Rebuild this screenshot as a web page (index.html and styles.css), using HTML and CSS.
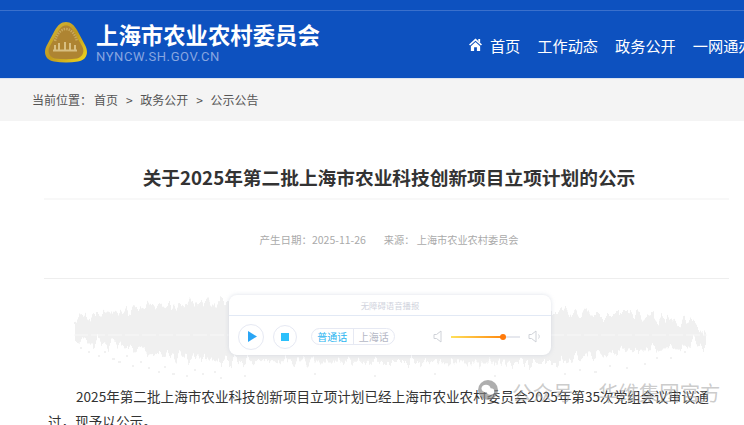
FILE: index.html
```html
<!DOCTYPE html>
<html lang="zh-CN">
<head>
  <meta charset="UTF-8">
  <meta name="viewport" content="width=device-width, initial-scale=1.0">
  <title>关于2025年第二批上海市农业科技创新项目立项计划的公示</title>
  <link rel="stylesheet" href="styles.css">
</head>
<body>
  <header class="header">
    <div class="header-inner">
      <a class="brand" href="#">
        <svg class="brand-logo" viewBox="0 0 44 42" aria-hidden="true">
          <defs>
            <linearGradient id="rim" x1="0" y1="0" x2="1" y2="1">
              <stop offset="0" stop-color="#d8bc3a"/>
              <stop offset="0.5" stop-color="#c09a1e"/>
              <stop offset="1" stop-color="#f0d820"/>
            </linearGradient>
          </defs>
          <path d="M22 0C27 0 30 3 33 8L41 23C45 30 43 38 34 39.500C26 40.800 18 40.800 10 39.500C1 38 -1 30 3 23L11 8C14 3 17 0 22 0Z" fill="url(#rim)"/>
          <path d="M22 3.500C25.500 3.500 28 6 30 10L38 24C41 29 39 35 33 36.500C26 37.500 18 37.500 11 36.500C5 35 3 29 6 24L14 10C16 6 18.500 3.500 22 3.500Z" fill="#ae8432"/>
          <path d="M11 19C13 12 17 7 22 7C27 7 31 12 33 19" fill="none" stroke="#c9a95c" stroke-width="2.500" stroke-dasharray="1.500 1"/>
          <path d="M9 28.500H33M11 28V23M15 28V21M21 28V20M26 28V21M31 28V23" fill="none" stroke="#d8bf82" stroke-width="2"/>
        </svg>
        <span class="brand-text">
          <span class="brand-name">上海市农业农村委员会</span>
          <span class="brand-url">NYNCW.SH.GOV.CN</span>
        </span>
      </a>
      <nav class="nav">
        <a href="#">
          <svg class="nav-home" viewBox="0 0 14 14" aria-hidden="true">
            <path d="M7 0.500L14 7L12.800 8.200L7 3L1.200 8.200L0 7Z"/>
            <path d="M10 1H12V5L10 3.200Z"/>
            <path d="M7 4.200L12 8.800V14H8.500V10H5.500V14H2V8.800Z"/>
          </svg>首页</a>
        <a href="#">工作动态</a>
        <a href="#">政务公开</a>
        <a href="#">一网通办</a>
      </nav>
    </div>
  </header>

  <div class="crumbs">
    <span>当前位置：</span>
    <a href="#">首页</a>
    <i>&gt;</i>
    <a href="#">政务公开</a>
    <i>&gt;</i>
    <a href="#">公示公告</a>
  </div>

  <main class="article">
    <h1 class="article-title">关于2025年第二批上海市农业科技创新项目立项计划的公示</h1>
    <div class="article-meta">
      <span>产生日期：2025-11-26</span>
      <span class="article-source">来源： 上海市农业农村委员会</span>
    </div>

    <section class="reader">
      <svg class="reader-wave" viewBox="0 0 633 86" aria-hidden="true">
        <defs>
          <filter id="wave-noise" x="-2%" y="-20%" width="104%" height="140%">
            <feTurbulence type="fractalNoise" baseFrequency="0.22 0.015" numOctaves="3" seed="7" result="noise"/>
            <feDisplacementMap in="SourceGraphic" in2="noise" scale="24" xChannelSelector="R" yChannelSelector="G"/>
          </filter>
        </defs>
        <g filter="url(#wave-noise)">
          <path d="M0 24L40 20L76 12L110 9L150 7L481 15L520 19L560 19L600 25L633 33V47L600 53L560 55L520 60L481 68L150 66L110 62L76 58L40 50L0 46Z"/>
        </g>
        <path class="wave-dots" d="M6 52h2v2h-2zM14 56h2v2h-2zM24 60h2v2h-2zM30 56h2v2h-2zM38 63h3v2h-3zM44 66h3v2h-3zM52 60h2v2h-2zM58 70h2v2h-2zM66 66h2v2h-2zM74 72h2v2h-2zM84 76h2v2h-2zM90 71h2v2h-2zM98 78h3v2h-3zM112 80h2v2h-2zM120 74h2v2h-2zM128 78h2v2h-2zM146 82h2v2h-2zM140 76h2v2h-2zM490 78h2v2h-2zM505 74h2v2h-2zM520 76h3v2h-3zM535 70h2v2h-2zM552 72h2v2h-2zM570 68h2v2h-2zM582 62h2v2h-2zM596 62h2v2h-2zM610 56h2v2h-2zM170 80h2v2h-2zM240 78h2v2h-2zM300 80h2v2h-2zM360 78h2v2h-2zM420 80h2v2h-2z"/>
        <path class="wave-mid" d="M0 40H633"/>
      </svg>
      <div class="player">
        <div class="player-head">无障碍语音播报</div>
        <div class="player-body">
          <button class="player-btn player-btn-play" aria-label="播放">
            <svg viewBox="0 0 10 12"><path d="M0 0L10 6L0 12Z"/></svg>
          </button>
          <button class="player-btn player-btn-stop" aria-label="停止"><span></span></button>
          <div class="dialects">
            <span class="dialect dialect-on">普通话</span>
            <span class="dialect">上海话</span>
          </div>
          <svg class="vol-icon vol-low" viewBox="0 0 9 13" aria-hidden="true">
            <path d="M8 1V12L3.500 8.500H1V4.500H3.500Z"/>
          </svg>
          <div class="vol-track"><div class="vol-fill"></div></div>
          <svg class="vol-icon vol-high" viewBox="0 0 13 13" aria-hidden="true">
            <path d="M8 1V12L3.500 8.500H1V4.500H3.500Z"/>
            <path d="M10.500 4.500C11.500 5.800 11.500 7.200 10.500 8.500"/>
          </svg>
        </div>
      </div>
    </section>

    <p class="article-text">2025年第二批上海市农业科技创新项目立项计划已经上海市农业农村委员会2025年第35次党组会议审议通过，现予以公示。</p>
  </main>

  <div class="watermark">
    <svg class="watermark-icon" viewBox="0 0 20 20" aria-hidden="true">
      <circle cx="10" cy="10" r="10"/>
      <ellipse cx="8" cy="8.500" rx="4.500" ry="3.800" fill="#fff"/>
      <ellipse cx="12.500" cy="11.500" rx="3.800" ry="3.200" fill="#fff"/>
    </svg>
    <span class="watermark-label">公众号</span>
    <span>华维集团官方</span>
  </div>
</body>
</html>
```

FILE: styles.css
```css
html, body {
  height: 100%;
  overflow: hidden;
}
body {
  margin: 0;
  position: relative;
  background: #fff;
  color: #333;
  font-family: "Noto Sans CJK SC", "Liberation Sans", sans-serif;
}
a {
  color: inherit;
  text-decoration: none;
}

.header {
  height: 78px;
  box-sizing: border-box;
  padding-top: 10px;
  background: #0d51bf;
}
.header-inner {
  height: 67px;
  border-top: 1px solid #3a70cc;
  display: flex;
  padding-left: 44px;
}
.brand {
  display: flex;
  align-items: center;
  gap: 8px;
  flex-shrink: 0;
  padding-bottom: 6px;
}
.brand-logo {
  width: 44px;
  height: 42px;
  margin-top: 2px;
}
.brand-text {
  display: flex;
  flex-direction: column;
}
.brand-name {
  color: #fff;
  font-size: 22.400px;
  font-weight: 700;
  line-height: 30px;
}
.brand-url {
  color: #88a6e0;
  font-family: Roboto, "Liberation Sans", sans-serif;
  font-size: 13px;
  letter-spacing: 0.600px;
  line-height: 16px;
}
.nav {
  display: flex;
  align-items: center;
  gap: 17px;
  flex-shrink: 0;
  font-size: 15.200px;
  color: #fff;
  margin-left: 149px;
}
.nav a {
  display: flex;
  align-items: center;
  white-space: nowrap;
}
.nav-home {
  width: 13px;
  height: 13px;
  margin-right: 8px;
  fill: #fff;
}

.crumbs {
  height: 43px;
  background: #f4f4f4;
  border-top: 1px solid #dbe3f0;
  box-sizing: border-box;
  padding: 0 0 2px 32px;
  display: flex;
  align-items: center;
  font-size: 12px;
  color: #555;
}
.crumbs span {
  margin-right: 2px;
}
.crumbs i {
  font-style: normal;
  margin: 0 7.500px 0 8px;
}

.article {
  padding: 0 15px 0 44px;
}
.article-title {
  margin: 0;
  height: 79px;
  box-sizing: border-box;
  padding: 42px 0 0 5px;
  border-bottom: 2px solid #f8f8f8;
  font-size: 18.700px;
  font-weight: 700;
  line-height: 28px;
  color: #333;
  text-align: center;
}
.article-meta {
  height: 78px;
  padding-left: 5px;
  border-bottom: 1px solid #eee;
  display: flex;
  justify-content: center;
  align-items: center;
  gap: 18px;
  font-size: 10.500px;
  color: #aaa;
}
.article-source {
  font-size: 10.200px;
}

.reader {
  position: relative;
  height: 105px;
  display: flex;
  justify-content: center;
  padding: 16px 0 0 7px;
  box-sizing: border-box;
}
.reader-wave {
  position: absolute;
  left: 30px;
  top: 16px;
  width: 633px;
  height: 86px;
  fill: #f0f0f0;
}
.wave-dots {
  fill: #f1f1f1;
}
.wave-mid {
  fill: none;
  stroke: #f8f8f8;
  stroke-width: 1;
  stroke-dasharray: 14 3;
}
.player {
  position: relative;
  width: 322px;
  height: 60px;
  background: #fff;
  border-radius: 8px;
  box-shadow: 0 0 4px rgba(170, 180, 200, 0.4);
}
.player-head {
  height: 20px;
  border-bottom: 1px solid #e2e9f5;
  font-size: 8.400px;
  line-height: 20px;
  text-align: center;
  color: #d0d3dd;
}
.player-body {
  height: 41px;
  display: flex;
  align-items: center;
  padding-left: 9px;
}
.player-btn {
  padding: 0;
  background: #fff;
  border: 1px solid #e6e9f3;
  border-radius: 50%;
  display: flex;
  align-items: center;
  justify-content: center;
}
.player-btn-play {
  width: 26px;
  height: 26px;
}
.player-btn-play svg {
  width: 9px;
  height: 11px;
  fill: #2aa5f5;
  margin-left: 2px;
}
.player-btn-stop {
  width: 24px;
  height: 24px;
  margin-left: 9px;
}
.player-btn-stop span {
  width: 8px;
  height: 8px;
  background: #2cc0fb;
}
.dialects {
  margin-left: 14px;
  width: 84px;
  height: 17px;
  box-sizing: border-box;
  border: 1px solid #e6e9f3;
  border-radius: 9px;
  display: flex;
  align-items: center;
  font-size: 10px;
}
.dialect {
  flex: 1;
  text-align: center;
  color: #b5b8c5;
  line-height: 15px;
}
.dialect-on {
  color: #2bb5f0;
  border-right: 1px solid #e6e9f3;
}
.vol-icon {
  height: 13px;
  fill: none;
  stroke: #cfd2d8;
  stroke-width: 1;
}
.vol-low {
  width: 9px;
  margin-left: 38px;
}
.vol-high {
  width: 13px;
}
.vol-track {
  position: relative;
  width: 69px;
  height: 2px;
  margin: 0 8px 0 9px;
  background: #e6e8ee;
}
.vol-fill {
  position: relative;
  width: 52px;
  height: 2px;
  background: linear-gradient(90deg, #ffe05a, #ff8a10);
}
.vol-fill::after {
  content: "";
  position: absolute;
  right: -3px;
  top: -2px;
  width: 6px;
  height: 6px;
  border-radius: 50%;
  background: #ff7a0a;
}

.article-text {
  margin: 0;
  padding: 0 20px 0 4px;
  font-size: 13.600px;
  line-height: 25px;
  text-indent: 28px;
  color: #333;
}

.watermark {
  position: absolute;
  left: 478px;
  top: 380px;
  display: flex;
  align-items: center;
  font-size: 20.400px;
  line-height: 24px;
  color: rgba(160, 160, 160, 0.55);
  white-space: nowrap;
}
.watermark-icon {
  width: 20px;
  height: 20px;
  margin: -4px 14px 0 0;
  fill: rgba(130, 130, 130, 0.65);
}
.watermark-label {
  margin-right: 25px;
}
```
